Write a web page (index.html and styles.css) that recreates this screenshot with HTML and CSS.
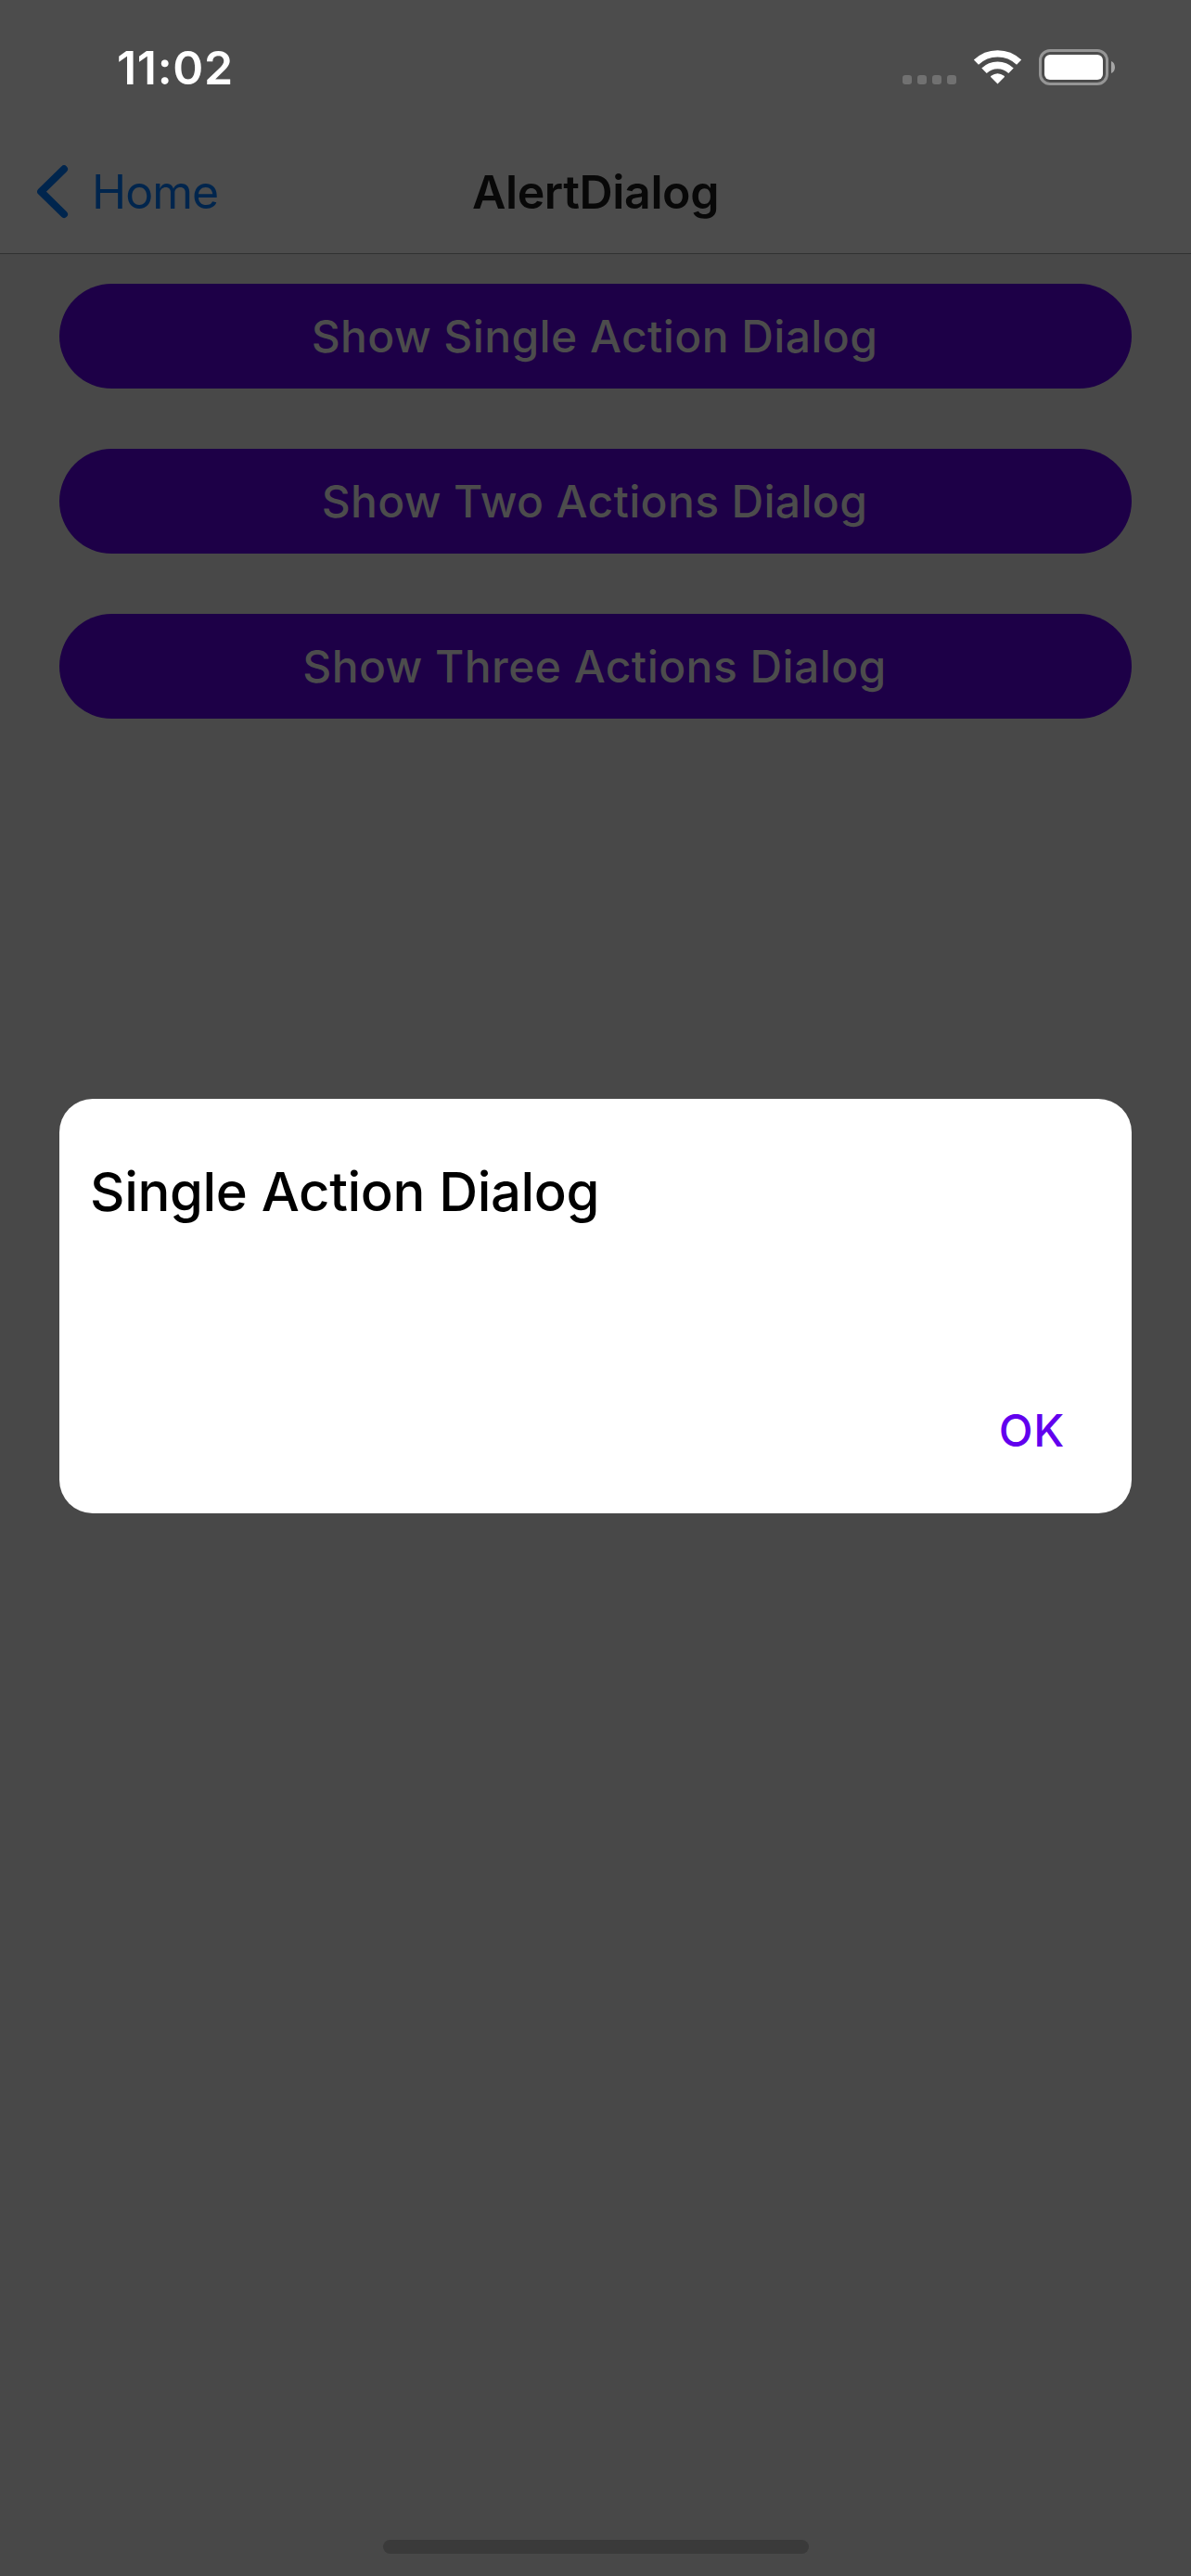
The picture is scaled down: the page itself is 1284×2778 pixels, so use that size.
FILE: index.html
```html
<!DOCTYPE html>
<html lang="en">
<head>
<meta charset="utf-8">
<title>AlertDialog</title>
<link rel="stylesheet" href="styles.css">
</head>
<body>
<div class="screen">
  <header class="header">
    <div class="status-bar">
      <span class="time">11:02</span>
      <svg class="status-icons" width="230" height="40" viewBox="973 53 230 40" aria-hidden="true">
        <g fill="#717171">
          <rect x="973" y="81" width="10" height="10" rx="3"/>
          <rect x="989" y="81" width="10" height="10" rx="3"/>
          <rect x="1005" y="81" width="10" height="10" rx="3"/>
          <rect x="1021" y="81" width="10" height="10" rx="3"/>
        </g>
        <g fill="none" stroke="#fff">
          <path d="M1052.4 67.2A33.2 33.2 0 0 1 1098.6 67.2" stroke-width="7.4"/>
          <path d="M1061 76.2A20.8 20.8 0 0 1 1090 76.2" stroke-width="7.8"/>
        </g>
        <path d="M1075.5 90.6L1068.3 83.3Q1067.6 82.4 1068.5 81.8Q1075.5 76.6 1082.5 81.8Q1083.4 82.4 1082.7 83.3Z" fill="#fff"/>
        <rect x="1121.5" y="54.5" width="72" height="36" rx="10.5" fill="none" stroke="#959595" stroke-width="3"/>
        <rect x="1126" y="59" width="63" height="27" rx="6" fill="#fff"/>
        <path d="M1198 66C1203.3 68 1203.3 77 1198 79Z" fill="#a6a6a6"/>
      </svg>
    </div>
    <nav class="nav-bar">
      <a class="back">
        <svg class="chevron" width="34" height="58" viewBox="40 178 34 58" aria-hidden="true">
          <path d="M69 182.3L44.2 206.7L69 231" fill="none" stroke="#00254d" stroke-width="8" stroke-linecap="round" stroke-linejoin="round"/>
        </svg>
        <span class="back-label">Home</span>
      </a>
      <h1 class="nav-title">AlertDialog</h1>
    </nav>
  </header>
  <main class="content">
    <button class="action">Show Single Action Dialog</button>
    <button class="action two">Show Two Actions Dialog</button>
    <button class="action three">Show Three Actions Dialog</button>
  </main>
  <div class="home-indicator"></div>
  <section class="dialog" role="dialog">
    <h2 class="dialog-title">Single Action Dialog</h2>
    <button class="ok">OK</button>
  </section>
</div>
</body>
</html>
```
FILE: styles.css
```css
* { box-sizing: border-box; margin: 0; padding: 0; }

body { font-family: "Inter", "Liberation Sans", sans-serif; background: #484848; }

button { border: 0; background: none; font-family: inherit; }

.screen {
  position: relative;
  display: flex;
  flex-direction: column;
  width: 1284px;
  height: 2778px;
  overflow: hidden;
  background: #484848;
}

.header {
  display: flex;
  flex-direction: column;
  height: 274px;
  background: #4c4c4c;
  border-bottom: 1px solid #303131;
}

.status-bar {
  display: flex;
  justify-content: space-between;
  align-items: flex-start;
  height: 141px;
  padding: 43px 81px 0 126px;
}

.time {
  font-size: 50px;
  line-height: 60px;
  font-weight: 600;
  letter-spacing: 0.7px;
  color: #fff;
}

.status-icons { margin-top: 10px; }

.nav-bar {
  display: grid;
  grid-template-columns: 1fr auto 1fr;
  align-items: start;
  padding: 36px 40px 0;
}

.back { display: flex; }

.chevron { margin-top: 1px; }

.back-label {
  margin-left: 25px;
  font-size: 50px;
  line-height: 60px;
  letter-spacing: -0.98px;
  color: #00254d;
}

.nav-title {
  font-size: 50px;
  line-height: 60px;
  font-weight: 600;
  letter-spacing: -0.37px;
  color: #080808;
}

.content {
  display: flex;
  flex: 1;
  flex-direction: column;
  gap: 65px;
  padding: 32px 64px 0;
}

.action {
  height: 113px;
  padding-right: 2px;
  border-radius: 57px;
  background: #1d0047;
  color: #4c4c4c;
  font-size: 48px;
  line-height: 59px;
  font-weight: 500;
  letter-spacing: 0.4px;
}

.two { letter-spacing: 0.33px; }

.three { letter-spacing: 0.43px; }

.home-indicator {
  align-self: center;
  width: 459px;
  height: 15px;
  margin-bottom: 24px;
  border-radius: 8px;
  background: #3a3a3a;
}

.dialog {
  position: absolute;
  top: 1185px;
  left: 64px;
  display: flex;
  flex-direction: column;
  justify-content: space-between;
  width: 1156px;
  height: 447px;
  padding: 65px 72px 60px 33px;
  border-radius: 36px;
  background: #fff;
}

.dialog-title {
  font-size: 58px;
  line-height: 70px;
  font-weight: 500;
  letter-spacing: -0.34px;
  color: #000;
}

.ok {
  align-self: flex-end;
  font-size: 48px;
  line-height: 59px;
  font-weight: 500;
  letter-spacing: 0.7px;
  color: #6200ee;
}
```
